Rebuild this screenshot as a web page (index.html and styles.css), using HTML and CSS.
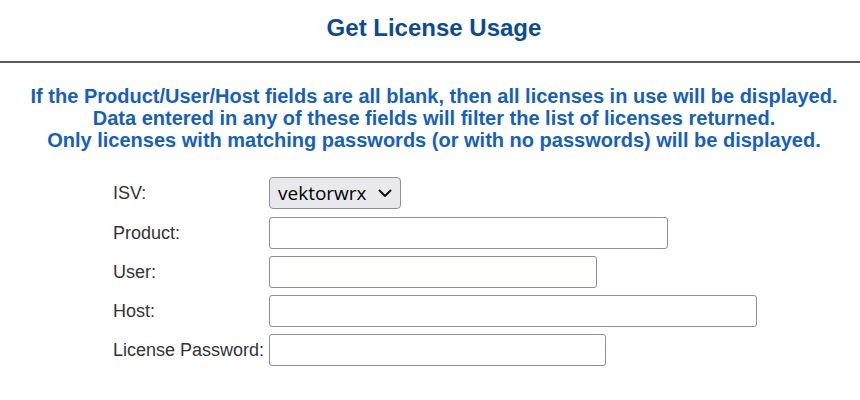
FILE: index.html
```html
<!DOCTYPE html>
<html>
<head>
<meta charset="utf-8">
<link rel="stylesheet" href="styles.css">
</head>
<body>
<h1 class="title">Get License Usage</h1>
<hr class="rule">
<p class="notice">If the Product/User/Host fields are all blank, then all licenses in use will be displayed.<br>Data entered in any of these fields will filter the list of licenses returned.<br>Only licenses with matching passwords (or with no passwords) will be displayed.</p>
<form class="form">
  <label class="lbl lbl-isv">ISV:</label>
  <div class="field"><div class="select">vektorwrx <svg class="chev" width="14" height="9" viewBox="0 0 14 9"><path d="M1.5 1.5 L7 7 L12.5 1.5" fill="none" stroke="#111" stroke-width="2" stroke-linecap="round" stroke-linejoin="round"/></svg></div></div>
  <label class="lbl">Product:</label>
  <div class="field"><input class="inp w-product" type="text"></div>
  <label class="lbl">User:</label>
  <div class="field"><input class="inp w-user" type="text"></div>
  <label class="lbl">Host:</label>
  <div class="field"><input class="inp w-host" type="text"></div>
  <label class="lbl">License Password:</label>
  <div class="field"><input class="inp w-pass" type="password"></div>
</form>
</body>
</html>
```
FILE: styles.css
```css
html, body {
  margin: 0;
  padding: 0;
  background: #fff;
  font-family: "Liberation Sans", Arial, sans-serif;
}
.title {
  margin: 0;
  padding: 16px 0 0 8px;
  height: 30px;
  font-size: 24px;
  line-height: 24px;
  font-weight: bold;
  color: #0b4a94;
  text-align: center;
}
.rule {
  margin: 15px 0 0 0;
  border: 0;
  height: 2px;
  background: #5a5a5a;
}
.notice {
  margin: 22px 0 0 0;
  padding-left: 8px;
  font-size: 20px;
  line-height: 22px;
  font-weight: bold;
  color: #1660bd;
  text-align: center;
}
.form {
  display: grid;
  grid-template-columns: 156px auto;
  row-gap: 7px;
  margin: 26px 0 0 113px;
  align-items: center;
}
.lbl {
  font-size: 18px;
  color: #333;
}
.lbl-isv {
  padding-bottom: 1px;
}
.field {
  display: flex;
}
.select {
  box-sizing: border-box;
  height: 32px;
  width: 132px;
  margin-bottom: 1px;
  display: flex;
  align-items: center;
  justify-content: space-between;
  padding: 0 8px 0 8px;
  background: #e9e9ed;
  border: 1px solid #8f8f9d;
  border-radius: 4px;
  font-size: 19px;
  color: #000;
  font-family: "Open Sans", "Noto Sans", sans-serif;
}
.chev { display: block; }
.inp {
  box-sizing: border-box;
  height: 32px;
  margin: 0;
  border: 1px solid #8f8f9d;
  border-radius: 3px;
  background: #fff;
  font-size: 18px;
  padding: 2px 4px;
}
.w-product { width: 399px; }
.w-user { width: 328px; }
.w-host { width: 488px; }
.w-pass { width: 337px; }
```
